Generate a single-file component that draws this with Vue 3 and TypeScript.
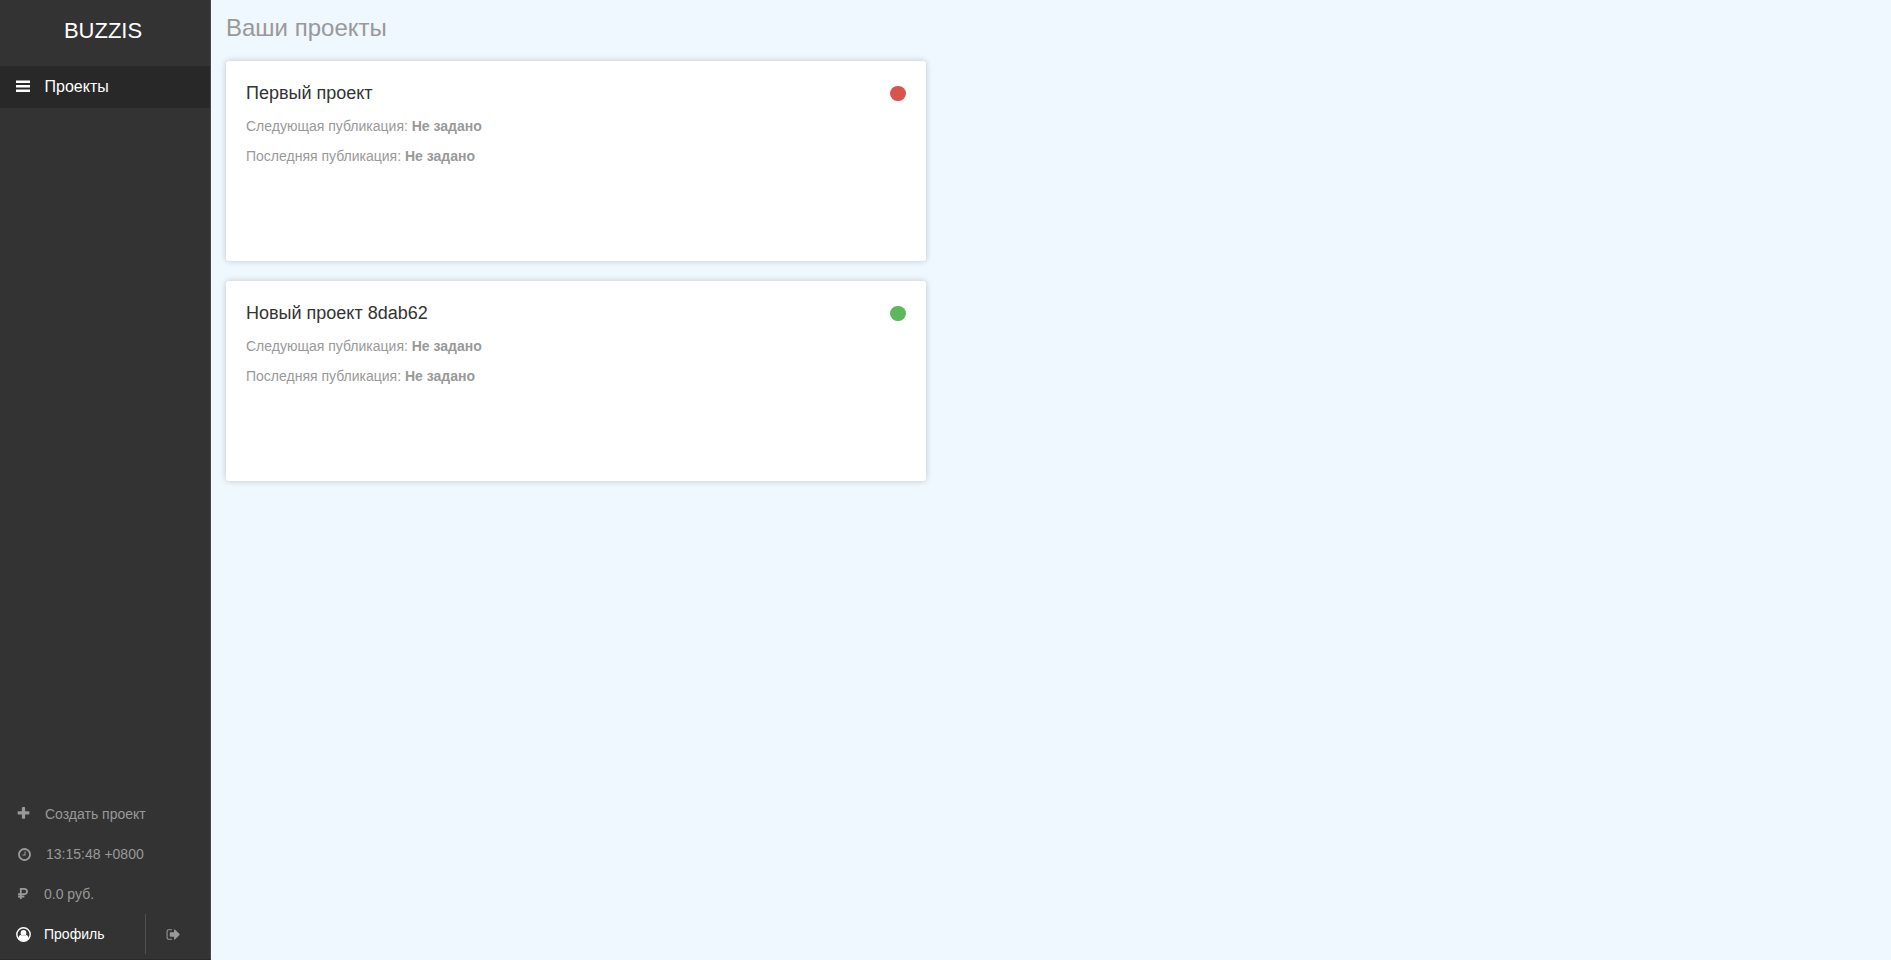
<script setup lang="ts">
interface Project {
  title: string
  status: 'stopped' | 'active'
  next: string
  last: string
}

const projects: Project[] = [
  { title: 'Первый проект', status: 'stopped', next: 'Не задано', last: 'Не задано' },
  { title: 'Новый проект 8dab62', status: 'active', next: 'Не задано', last: 'Не задано' },
]
</script>

<template>
  <div class="app">
    <aside class="sidebar">
      <div class="brand">BUZZIS</div>
      <nav>
        <a class="nav-item">
          <svg class="icon bars" viewBox="0 0 14 12">
            <path d="M0 .4h14V3H0zM0 5h14v2.6H0zM0 9.4h14V12H0z" />
          </svg>
          <span>Проекты</span>
        </a>
      </nav>
      <div class="footer">
        <a class="row create">
          <svg class="icon fa" viewBox="0 0 1792 1792">
            <path d="M1600 736v192q0 40-28 68t-68 28h-416v416q0 40-28 68t-68 28h-192q-40 0-68-28t-28-68v-416h-416q-40 0-68-28t-28-68v-192q0-40 28-68t68-28h416v-416q0-40 28-68t68-28h192q40 0 68 28t28 68v416h416q40 0 68 28t28 68z" />
          </svg>
          <span>Создать проект</span>
        </a>
        <div class="row time">
          <svg class="icon fa" viewBox="0 0 1792 1792">
            <path d="M1024 544v448q0 14-9 23t-23 9h-320q-14 0-23-9t-9-23v-64q0-14 9-23t23-9h224v-352q0-14 9-23t23-9h64q14 0 23 9t9 23zm416 352q0-148-73-273t-198-198-273-73-273 73-198 198-73 273 73 273 198 198 273 73 273-73 198-198 73-273zm224 0q0 209-103 385.5t-279.5 279.5-385.5 103-385.5-103-279.5-279.5-103-385.5 103-385.5 279.5-279.5 385.5-103 385.5 103 279.5 279.5 103 385.5z" />
          </svg>
          <span>13:15:48 +0800</span>
        </div>
        <div class="row balance">
          <svg class="icon ruble" viewBox="0 0 10 11">
            <path d="M2.8 11V.9h3.600a2.600 2.600 0 0 1 0 5.200H0M0 8.500h6.400" />
          </svg>
          <span>0.0 руб.</span>
        </div>
        <div class="profile-row">
          <a class="row profile">
            <svg class="icon user" viewBox="0 0 15 15">
              <circle class="ring" cx="7.5" cy="7.5" r="6.7" />
              <circle cx="7.5" cy="5.900" r="2.9" />
              <path d="M2.200 11.400c.3-2.200 1.300-3.300 2.600-3.500 1.600 1.400 3.800 1.400 5.400 0 1.300.2 2.300 1.300 2.600 3.500-2.700 3.600-7.900 3.600-10.600 0z" />
            </svg>
            <span>Профиль</span>
          </a>
          <a class="logout" aria-label="Выйти">
            <svg class="icon fa" viewBox="0 0 1792 1792">
              <path d="M704 1440q0 4 1 20t.5 26.500-3 23.500-10 19.500-20.500 6.500h-320q-119 0-203.500-84.500t-84.500-203.500v-704q0-119 84.500-203.500t203.500-84.500h320q13 0 22.500 9.500t9.500 22.500q0 4 1 20t.5 26.500-3 23.500-10 19.500-20.500 6.500h-320q-66 0-113 47t-47 113v704q0 66 47 113t113 47h312l11.500 1 11.500 3 8 5.500 7 9 2 13.500zm928-544q0 26-19 45l-544 544q-19 19-45 19t-45-19-19-45v-288h-448q-26 0-45-19t-19-45v-384q0-26 19-45t45-19h448v-288q0-26 19-45t45-19 45 19l544 544q19 19 19 45z" />
            </svg>
          </a>
        </div>
      </div>
    </aside>
    <main class="content">
      <h1>Ваши проекты</h1>
      <section v-for="project in projects" :key="project.title" class="card">
        <header>
          <h2>{{ project.title }}</h2>
          <span class="dot" :class="project.status"></span>
        </header>
        <p>Следующая публикация: <b>{{ project.next }}</b></p>
        <p>Последняя публикация: <b>{{ project.last }}</b></p>
      </section>
    </main>
  </div>
</template>

<style>
body {
  margin: 0;
}
</style>

<style scoped>
.app {
  display: flex;
  height: 100vh;
  overflow: hidden;
  background: #eff7ff;
  font: 14px/20px "Liberation Sans", Arial, sans-serif;
  color: #999;
}
.sidebar {
  box-sizing: border-box;
  width: 211px;
  flex: none;
  display: flex;
  flex-direction: column;
  background: #333;
  border-right: 1px solid #484848;
  padding-bottom: 5px;
  border-bottom: 1px solid #292929;
}
.brand {
  height: 66px;
  box-sizing: border-box;
  padding: 16px 4px 0 0;
  font-size: 22px;
  line-height: 30px;
  text-align: center;
  color: #fff;
}
.icon {
  display: block;
  flex: none;
  fill: currentColor;
}
.fa {
  width: 15px;
  height: 15px;
}
.nav-item {
  display: flex;
  align-items: center;
  height: 42px;
  padding-left: 16px;
  background: #282828;
  color: #fff;
  font-size: 16px;
}
.bars {
  width: 14px;
  height: 12px;
  margin: 0 14.5px 2px 0;
}
.footer {
  margin-top: auto;
}
.row {
  display: flex;
  align-items: center;
  height: 40px;
}
.create {
  padding-left: 16px;
}
.create .icon {
  margin: 0 14px 1px 0;
}
.time {
  padding-left: 16.5px;
}
.time .icon {
  margin-right: 14.5px;
}
.balance {
  padding-left: 18px;
}
.ruble {
  width: 10px;
  height: 11px;
  margin: 0 16px 1px 0;
  fill: none;
  stroke: currentColor;
  stroke-width: 1.8;
}
.profile-row {
  display: flex;
}
.profile {
  box-sizing: border-box;
  width: 146px;
  padding-left: 15.5px;
  border-right: 1px solid #505050;
  color: #fff;
}
.user {
  width: 15px;
  height: 15px;
  margin-right: 13.5px;
}
.ring {
  fill: none;
  stroke: currentColor;
  stroke-width: 1.4;
}
.logout {
  display: flex;
  align-items: center;
  padding-left: 20px;
}
.content {
  padding: 12px 15px;
}
h1 {
  margin: 0 0 17px;
  font-size: 24px;
  line-height: 32px;
  font-weight: 400;
}
.card {
  box-sizing: border-box;
  width: 700px;
  height: 200px;
  margin-bottom: 20px;
  padding: 20px;
  background: #fff;
  border-radius: 3px;
  box-shadow: 0 0 6px rgba(0, 0, 0, 0.2);
}
header {
  display: flex;
  justify-content: space-between;
  align-items: center;
  height: 24px;
  margin-bottom: 11px;
}
h2 {
  margin: 0;
  font-size: 18px;
  line-height: 24px;
  font-weight: 400;
  color: #333;
}
.dot {
  width: 15.6px;
  height: 15.6px;
  margin-top: 1px;
  border-radius: 50%;
}
.stopped {
  background: #d9534f;
}
.active {
  background: #5cb85c;
}
p {
  margin: 0 0 10px;
}
</style>
